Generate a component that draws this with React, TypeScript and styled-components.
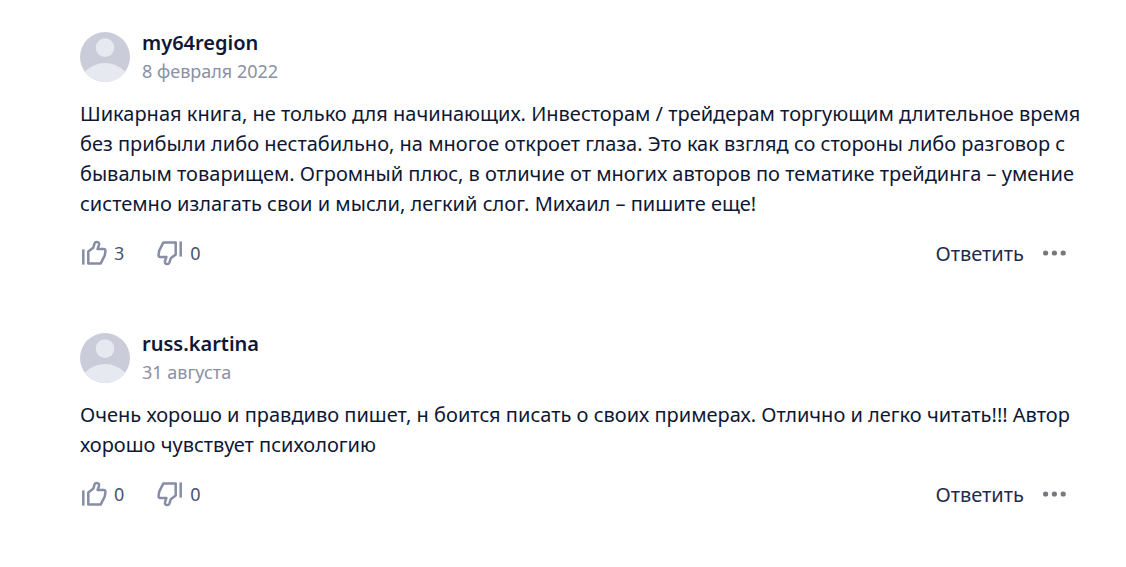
import React from "react";
import styled, { createGlobalStyle } from "styled-components";

const Global = createGlobalStyle`
  *, *::before, *::after { box-sizing: border-box; }
  body {
    margin: 0;
    background: #fff;
    color: #0e1734;
    font-family: "Noto Sans", "Open Sans", sans-serif;
  }
`;

const Page = styled.main`
  display: flex;
  flex-direction: column;
  gap: 61px;
  padding: 29px 44px 32px 80px;
`;

const Review = styled.article`
  display: flex;
  flex-direction: column;
`;

const Header = styled.header`
  display: flex;
  align-items: center;
  gap: 12px;
`;

const Avatar = styled.svg`
  width: 50px;
  height: 50px;
  flex: none;
`;

const Name = styled.h3`
  margin: 0;
  font-size: 20px;
  line-height: 28px;
  font-weight: 600;
`;

const PostedOn = styled.time`
  display: block;
  color: #8b90a4;
  font-size: 18px;
  line-height: 28px;
`;

const Text = styled.p`
  margin: 14px 0 0;
  font-size: 20px;
  line-height: 30px;
`;

const Actions = styled.footer`
  display: flex;
  align-items: center;
  margin-top: 18px;
  padding-right: 14px;
`;

const IconButton = styled.button`
  display: flex;
  align-items: center;
  gap: 6px;
  height: 32px;
  padding: 0;
  border: 0;
  background: none;
  color: #4a5273;
  font: inherit;
  font-size: 18px;
  cursor: pointer;
`;

const Votes = styled.div`
  display: flex;
  gap: 32px;
  margin-right: auto;
`;

const ReplyButton = styled(IconButton)`
  color: #1f2b50;
  font-size: 20px;
  margin-right: 18px;
`;

const Thumb = styled.svg<{ $down?: boolean }>`
  width: 28px;
  height: 28px;
  fill: none;
  stroke: #868da5;
  stroke-width: 2.5;
  stroke-linejoin: round;
  transform: ${(p) => (p.$down ? "rotate(180deg)" : "none")};
`;

const ThumbIcon = ({ down }: { down?: boolean }) => (
  <Thumb viewBox="0 0 28 28" $down={down} aria-hidden="true">
    <path d="M3.3 10.4v15.2" />
    <path d="M8.3 12.6 13.2 8.8 14.6 4.4Q15.2 2.9 16.8 3 19.6 3.2 19 5.8L17.6 10H23.8Q25.6 10 25.4 12L24.8 16.4 20.6 24.6H8.3Z" />
  </Thumb>
);

const ReviewCard = ({ review }: { review: ReviewData }) => (
  <Review>
    <Header>
      <Avatar viewBox="0 0 50 50" aria-hidden="true">
        <clipPath id={`avatar-${review.name}`}>
          <circle cx="25" cy="25" r="25" />
        </clipPath>
        <g clipPath={`url(#avatar-${review.name})`}>
          <rect width="50" height="50" fill="#cacdd9" />
          <circle cx="25" cy="15.6" r="9.3" fill="#e6e9ef" />
          <circle cx="25" cy="59" r="28" fill="#e6e9ef" />
        </g>
      </Avatar>
      <div>
        <Name>{review.name}</Name>
        <PostedOn>{review.date}</PostedOn>
      </div>
    </Header>
    <Text>{review.text}</Text>
    <Actions>
      <Votes>
        <IconButton type="button" aria-label={`Нравится: ${review.likes}`}>
          <ThumbIcon />
          {review.likes}
        </IconButton>
        <IconButton type="button" aria-label={`Не нравится: ${review.dislikes}`}>
          <ThumbIcon down />
          {review.dislikes}
        </IconButton>
      </Votes>
      <ReplyButton type="button">Ответить</ReplyButton>
      <IconButton type="button" aria-label="Ещё">
        <svg width="26" height="8" viewBox="0 0 26 8" fill="#77787d" aria-hidden="true">
          <circle cx="3.6" cy="4" r="2.6" />
          <circle cx="12.4" cy="4" r="2.6" />
          <circle cx="21.2" cy="4" r="2.6" />
        </svg>
      </IconButton>
    </Actions>
  </Review>
);

interface ReviewData {
  name: string;
  date: string;
  text: string;
  likes: number;
  dislikes: number;
}

const reviews: ReviewData[] = [
  {
    name: "my64region",
    date: "8 февраля 2022",
    text: "Шикарная книга, не только для начинающих. Инвесторам / трейдерам торгующим длительное время без прибыли либо нестабильно, на многое откроет глаза. Это как взгляд со стороны либо разговор с бывалым товарищем. Огромный плюс, в отличие от многих авторов по тематике трейдинга – умение системно излагать свои и мысли, легкий слог. Михаил – пишите еще!",
    likes: 3,
    dislikes: 0,
  },
  {
    name: "russ.kartina",
    date: "31 августа",
    text: "Очень хорошо и правдиво пишет, н боится писать о своих примерах. Отлично и легко читать!!! Автор хорошо чувствует психологию",
    likes: 0,
    dislikes: 0,
  },
];

export default function App() {
  return (
    <>
      <Global />
      <Page>
        {reviews.map((review) => (
          <ReviewCard key={review.name} review={review} />
        ))}
      </Page>
    </>
  );
}
